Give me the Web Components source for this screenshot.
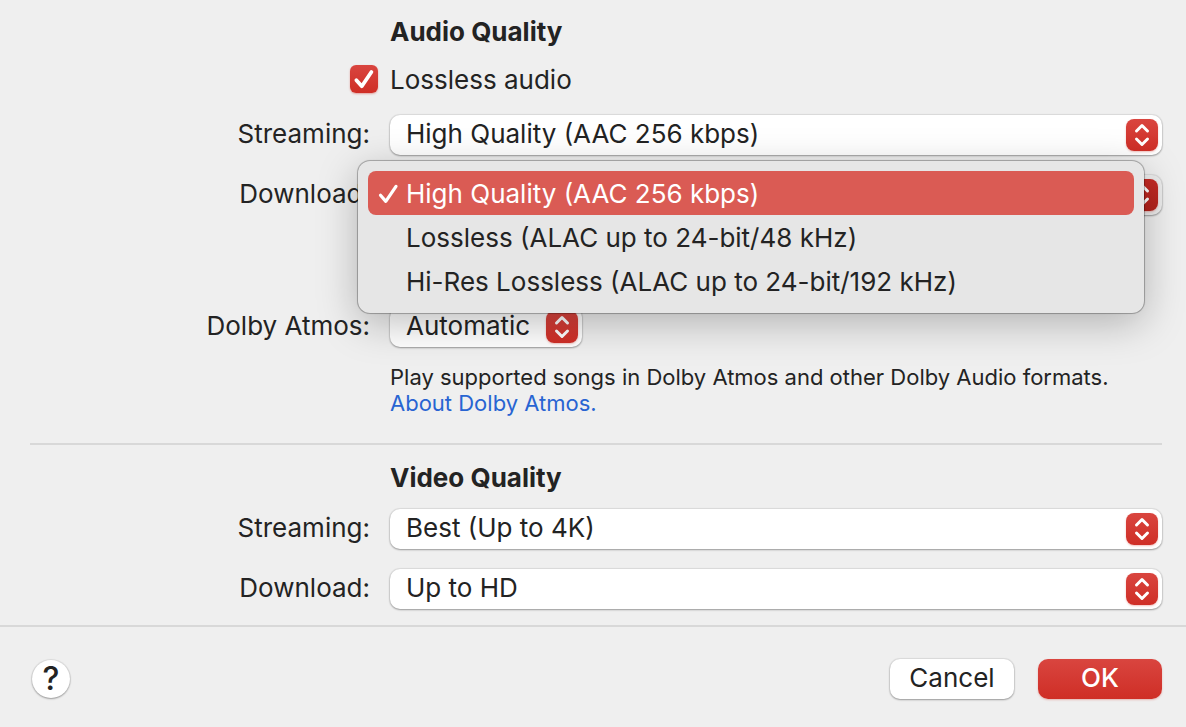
<!DOCTYPE html>
<html lang="en">
<head>
<meta charset="utf-8">
<title>Playback Settings</title>
<style>
  html { height: 100%; }
  body {
    margin: 0;
    min-height: 100%;
    background: #efefef;
    color: #232323;
    font: 26px/32px Inter, "Liberation Sans", sans-serif;
  }
</style>
</head>
<body>
<playback-settings></playback-settings>

<script>
const define = (name, html, setup) => {
  const template = document.createElement('template');
  template.innerHTML = html;
  customElements.define(name, class extends HTMLElement {
    constructor() {
      super();
      this.attachShadow({ mode: 'open' }).append(template.content.cloneNode(true));
    }
    connectedCallback() {
      if (setup && !this.ready) setup(this, this.shadowRoot);
      this.ready = true;
    }
  });
};

define('section-title', `
  <style>
    :host { display: block; padding-left: 390px; }
    h2 { margin: 0; font-size: 26px; line-height: 32px; font-weight: 700; }
  </style>
  <h2><slot></slot></h2>
`);

define('check-row', `
  <style>
    :host { display: grid; grid-template-columns: 378px 1fr; gap: 12px; align-items: start; }
    .box { position: relative; justify-self: end; width: 28px; height: 28px; margin-top: 1px; }
    input {
      appearance: none; margin: 0; width: 28px; height: 28px; border-radius: 6px; display: block;
      background: linear-gradient(#d9453f, #cf2e26);
      box-shadow: 0 1px 2px rgba(207, 46, 38, .4);
    }
    svg { position: absolute; inset: 0; pointer-events: none; }
    input:not(:checked) + svg { display: none; }
  </style>
  <span class="box">
    <input id="check" type="checkbox" checked>
    <svg width="28" height="28" viewBox="0 0 28 28" fill="none" stroke="#fff" stroke-width="3.8" stroke-linecap="round" stroke-linejoin="round"><path d="M6.4 15.2 11.8 21.2 21.4 7"/></svg>
  </span>
  <label for="check"><slot></slot></label>
`);

define('select-row', `
  <style>
    :host { display: grid; grid-template-columns: 370px 1fr; gap: 20px; }
    label { text-align: right; line-height: 38px; }
    .field { position: relative; height: 40px; }
    :host([compact]) .field { width: 192px; }
    select {
      appearance: none; box-sizing: border-box; display: block; width: 100%; height: 40px;
      margin: 0; padding: 0 44px 2px 16px; border: 0; border-radius: 10px;
      background: #fff; color: inherit; font: inherit;
      box-shadow: 0 0 1px 1px rgba(0, 0, 0, .08), 0 1px 2px rgba(0, 0, 0, .3);
    }
    .badge {
      position: absolute; top: 4px; right: 4px; pointer-events: none;
      border-radius: 8px; background: linear-gradient(#d9453f, #cf2e26);
      box-shadow: 0 1px 2px rgba(207, 46, 38, .3);
    }
    :host([pressed]) select { background: #ececec; }
    :host([pressed]) .badge { background: linear-gradient(#c42a24, #b3231c); }
  </style>
  <label for="choice"></label>
  <div class="field">
    <select id="choice"><option></option></select>
    <svg class="badge" width="32" height="32" viewBox="0 0 32 32" fill="none" stroke="#fff" stroke-width="3" stroke-linecap="round" stroke-linejoin="round"><path d="M10.5 12 16 6.5 21.5 12M10.5 20 16 25.5 21.5 20"/></svg>
    <slot></slot>
  </div>
`, (host, root) => {
  root.querySelector('label').textContent = host.getAttribute('label');
  root.querySelector('option').textContent = host.getAttribute('value');
});

define('option-menu', `
  <style>
    :host {
      display: block; position: absolute; z-index: 10; top: -14px; left: -32px; right: 18px;
      box-sizing: border-box; padding: 10px; border-radius: 12px; background: #e6e6e6;
      box-shadow: 0 0 0 1px rgba(0, 0, 0, .2), 0 0 2px rgba(0, 0, 0, .3), 0 10px 40px rgba(0, 0, 0, .26);
    }
  </style>
  <div role="listbox" aria-label="Download quality"><slot></slot></div>
`);

define('menu-option', `
  <style>
    :host { display: block; }
    button {
      display: flex; align-items: center; width: 100%; height: 44px; padding: 2px 0 0 8px;
      border: 0; border-radius: 8px; background: none; color: inherit; font: inherit; text-align: left;
    }
    svg { flex: none; width: 30px; height: 24px; visibility: hidden; }
    :host([selected]) button { background: #da5b54; color: #fff; }
    :host([selected]) svg { visibility: visible; }
  </style>
  <button type="button" role="option">
    <svg viewBox="0 0 30 24" fill="none" stroke="currentColor" stroke-width="3.2" stroke-linecap="round" stroke-linejoin="round"><path d="M4.5 13.2 9.8 19.4 20 4.4"/></svg>
    <span><slot></slot></span>
  </button>
`, (host, root) => {
  root.querySelector('button').setAttribute('aria-selected', host.hasAttribute('selected'));
});

define('help-text', `
  <style>
    :host { display: block; padding-left: 390px; font-size: 22px; line-height: 26px; }
    ::slotted(p) { margin: 0; }
    ::slotted(a) { color: #2864d2; text-decoration: none; }
  </style>
  <slot></slot>
`);

define('push-button', `
  <style>
    :host { display: block; }
    button {
      display: block; width: 124px; height: 40px; padding: 0 0 2px; border: 0; border-radius: 10px;
      background: #fff; color: inherit; font: inherit;
      box-shadow: 0 0 1px 1px rgba(0, 0, 0, .08), 0 1px 2px rgba(0, 0, 0, .3);
    }
    :host([primary]) button {
      background: linear-gradient(#d9453f, #cf2e26); color: #fff; font-weight: 500;
      box-shadow: 0 1px 2px rgba(207, 46, 38, .3);
    }
    :host([round]) button { width: 38px; height: 38px; padding: 0; border-radius: 50%; font-size: 32px; font-weight: 500; }
  </style>
  <button type="button"><slot></slot></button>
`);

define('playback-settings', `
  <style>
    :host { display: block; }
    main { padding: 16px 24px 16px 0; }
    check-row { margin: 16px 0 19px; }
    select-row + select-row { margin-top: 20px; }
    select-row + select-row[compact] { margin-top: 92px; }
    help-text { margin-top: 17px; }
    hr { margin: 27px 0 17px 30px; border: 0; height: 2px; background: #d8d8d8; }
    section-title + select-row { margin-top: 15px; }
    footer {
      display: flex; align-items: center; gap: 24px; padding: 32px 24px 28px 32px;
      border-top: 2px solid #d8d8d8;
    }
    footer push-button[round] { margin-right: auto; }
  </style>
  <main>
    <section-title>Audio Quality</section-title>
    <check-row>Lossless audio</check-row>
    <select-row label="Streaming:" value="High Quality (AAC 256 kbps)"></select-row>
    <select-row label="Download:" value="High Quality (AAC 256 kbps)" pressed>
      <option-menu>
        <menu-option selected>High Quality (AAC 256 kbps)</menu-option>
        <menu-option>Lossless (ALAC up to 24-bit/48 kHz)</menu-option>
        <menu-option>Hi-Res Lossless (ALAC up to 24-bit/192 kHz)</menu-option>
      </option-menu>
    </select-row>
    <select-row label="Dolby Atmos:" value="Automatic" compact></select-row>
    <help-text>
      <p>Play supported songs in Dolby Atmos and other Dolby Audio formats.</p>
      <a href="#dolby-atmos">About Dolby Atmos.</a>
    </help-text>
    <hr>
    <section-title>Video Quality</section-title>
    <select-row label="Streaming:" value="Best (Up to 4K)"></select-row>
    <select-row label="Download:" value="Up to HD"></select-row>
  </main>
  <footer>
    <push-button round>?</push-button>
    <push-button>Cancel</push-button>
    <push-button primary>OK</push-button>
  </footer>
`);
</script>
</body>
</html>
